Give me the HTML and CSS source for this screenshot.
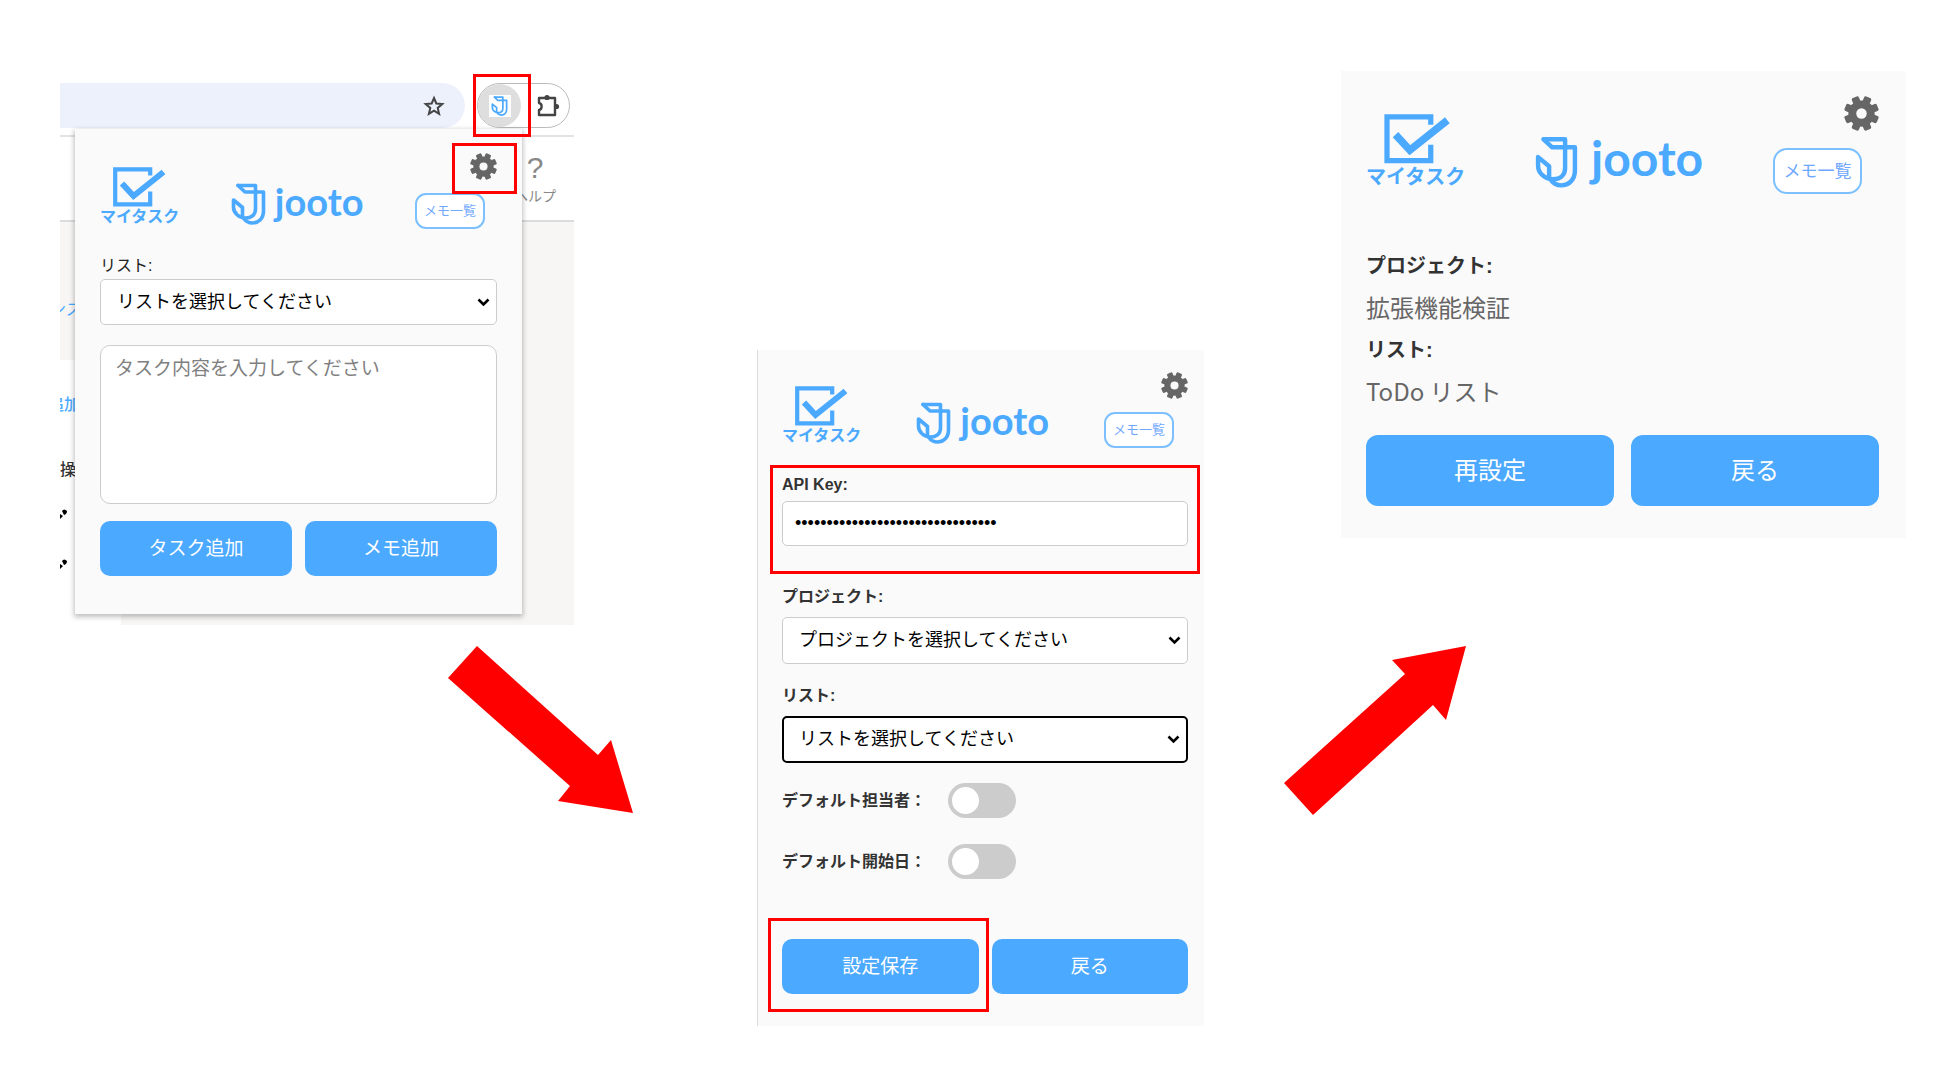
FILE: index.html
```html
<!DOCTYPE html>
<html lang="ja">
<head>
<meta charset="utf-8">
<meta name="viewport" content="width=device-width, initial-scale=1">
<title>jooto マイタスク 設定手順</title>
<link rel="stylesheet" href="styles.css">
</head>
<body>
<svg class="sprite" aria-hidden="true">
  <symbol id="gear" viewBox="0 0 24 24">
    <circle cx="12" cy="12" r="9"/>
    <g>
      <rect x="9.4" y="0" width="5.2" height="24" rx="1.2" transform="rotate(22.5 12 12)"/>
      <rect x="9.4" y="0" width="5.2" height="24" rx="1.2" transform="rotate(67.5 12 12)"/>
      <rect x="9.4" y="0" width="5.2" height="24" rx="1.2" transform="rotate(112.5 12 12)"/>
      <rect x="9.4" y="0" width="5.2" height="24" rx="1.2" transform="rotate(157.5 12 12)"/>
    </g>
    <circle cx="12" cy="12" r="3.6" fill="#fafafa"/>
  </symbol>
  <symbol id="check" viewBox="0 0 54 40">
    <path d="M37.2 8.5V2.3H2.2V37.3H37.2V24.5" fill="none" stroke="currentColor" stroke-width="4.2"/>
    <path d="M9 16.5L20.5 29L50.5 5" fill="none" stroke="currentColor" stroke-width="6"/>
  </symbol>
  <symbol id="mark" viewBox="0 0 35 42">
    <g fill="none" stroke="currentColor" stroke-width="3.6" stroke-linejoin="round" stroke-linecap="round">
      <path d="M7 2.5L14 9H32.5V28C32.5 36 27 40 21.5 40C17.500 40 14.500 38 12.500 35"/>
      <path d="M7 2.500H24.500V26C24.500 32 20 35 14.500 35C8 35 2.500 30 2.500 24V17L11.500 24.500V34"/>
    </g>
  </symbol>
</svg>

<main class="steps">
  <section class="browser" aria-label="拡張機能を開く">
    <div class="toolbar">
      <div class="address">
        <svg class="star" viewBox="0 0 24 24"><path d="M12 4L14.300 9.500L20.300 10L15.700 13.900L17.100 19.800L12 16.600L6.900 19.800L8.300 13.900L3.700 10L9.700 9.500Z" fill="none" stroke="#444" stroke-width="2"/></svg>
      </div>
      <div class="extensions">
        <button class="ext-button" type="button" aria-label="jooto">
          <span class="ext-icon"><svg class="ext-mark"><use href="#mark"/></svg></span>
          <span class="callout callout-ext"></span>
        </button>
        <svg class="puzzle" viewBox="0 0 24 24"><path d="M3 4H19V21H3V16C6.500 15.500 6.500 9.500 3 9Z" fill="none" stroke="#444" stroke-width="2.400" stroke-linejoin="round"/><circle cx="11" cy="3.500" r="2.600" fill="#444"/><circle cx="20.500" cy="12.500" r="2.600" fill="#444"/></svg>
      </div>
    </div>
    <div class="app-bar">
      <div class="help"><span class="help-mark">?</span><span>ヘルプ</span></div>
    </div>
    <div class="app-body">
      <div class="side">
        <div class="side-top"><a href="#" class="clip">ンス</a></div>
        <a href="#" class="clip side-add">追加</a>
        <span class="clip">操</span>
        <svg class="pencil" viewBox="0 0 8 12"><path d="M0 6L3 8L0 11ZM2 3Q4 0 7 3Q7 6 4 7Z"/></svg>
        <svg class="pencil" viewBox="0 0 8 12"><path d="M0 6L3 8L0 11ZM2 3Q4 0 7 3Q7 6 4 7Z"/></svg>
      </div>
    </div>

    <form class="popup popup-task">
      <header class="head">
        <div class="mytask"><svg class="check"><use href="#check"/></svg><span>マイタスク</span></div>
        <div class="logo"><svg class="mark"><use href="#mark"/></svg><span class="word">jooto</span></div>
        <div class="actions">
          <button class="gear-button" type="button" aria-label="設定"><svg class="gear"><use href="#gear"/></svg><span class="callout callout-gear"></span></button>
          <button class="memo" type="button">メモ一覧</button>
        </div>
      </header>
      <div class="field field-task">
        <label class="label-plain" for="task-list">リスト:</label>
        <select class="box" id="task-list"><option>リストを選択してください</option></select>
      </div>
      <textarea class="task-text" aria-label="タスク内容" placeholder="タスク内容を入力してください"></textarea>
      <div class="buttons">
        <button class="primary" type="button">タスク追加</button>
        <button class="primary" type="button">メモ追加</button>
      </div>
    </form>
  </section>

  <svg class="arrow arrow-down" viewBox="0 0 185 167" aria-hidden="true"><path d="M29 0L150 109L163 94L185 167L110 155L122 140L0 32Z"/></svg>

  <form class="popup popup-settings" aria-label="設定">
    <header class="head">
      <div class="mytask"><svg class="check"><use href="#check"/></svg><span>マイタスク</span></div>
      <div class="logo"><svg class="mark"><use href="#mark"/></svg><span class="word">jooto</span></div>
      <div class="actions">
        <button class="gear-button" type="button" aria-label="設定"><svg class="gear"><use href="#gear"/></svg></button>
        <button class="memo" type="button">メモ一覧</button>
      </div>
    </header>
    <div class="field field-key">
      <label for="api-key">API Key:</label>
      <input class="box" id="api-key" type="password" autocomplete="off" value="00000000000000000000000000000000">
      <span class="callout callout-key"></span>
    </div>
    <div class="field">
      <label for="project">プロジェクト:</label>
      <select class="box" id="project"><option>プロジェクトを選択してください</option></select>
    </div>
    <div class="field">
      <label for="list">リスト:</label>
      <select class="box box-focus" id="list"><option>リストを選択してください</option></select>
    </div>
    <div class="switches">
      <div class="switch-row"><label for="assignee">デフォルト担当者：</label><input class="switch" id="assignee" type="checkbox"></div>
      <div class="switch-row"><label for="start">デフォルト開始日：</label><input class="switch" id="start" type="checkbox"></div>
    </div>
    <div class="buttons">
      <button class="primary" type="button">設定保存<span class="callout callout-save"></span></button>
      <button class="primary" type="button">戻る</button>
    </div>
  </form>

  <svg class="arrow arrow-up" viewBox="0 0 182 170" aria-hidden="true"><path d="M182 0L162 74L149 59L29 169L0 137L121 28L108 14Z"/></svg>

  <section class="popup popup-summary" aria-label="設定内容">
    <header class="head">
      <div class="mytask"><svg class="check"><use href="#check"/></svg><span>マイタスク</span></div>
      <div class="logo"><svg class="mark"><use href="#mark"/></svg><span class="word">jooto</span></div>
      <div class="actions">
        <button class="gear-button" type="button" aria-label="設定"><svg class="gear"><use href="#gear"/></svg></button>
        <button class="memo" type="button">メモ一覧</button>
      </div>
    </header>
    <dl class="summary">
      <dt>プロジェクト:</dt>
      <dd>拡張機能検証</dd>
      <dt>リスト:</dt>
      <dd>ToDo リスト</dd>
    </dl>
    <div class="buttons">
      <button class="primary" type="button">再設定</button>
      <button class="primary" type="button">戻る</button>
    </div>
  </section>
</main>
</body>
</html>
```

FILE: styles.css
```css
* { box-sizing: border-box; }

body {
  margin: 0;
  background: #fff;
  color: #333;
  font-family: "Liberation Sans", "Noto Sans CJK JP", sans-serif;
  font-size: 16px;
  line-height: 24px;
}

button, input, select, textarea { font-family: inherit; margin: 0; }
button { cursor: pointer; }
svg { display: block; }
.sprite { position: absolute; width: 0; height: 0; }

/* Overlapping columns, so that each arrow can reach under its neighbours */
.steps {
  display: grid;
  grid-template-columns: 388fr 126fr 59fr 124fr 447fr 80fr 57fr 125fr 440fr;
  align-items: start;
  padding: 0 54px 53px 60px;
}
.steps > * { grid-row: 1; min-width: 0; }
.browser { grid-column: 1 / 3; margin-top: 83px; }
.arrow-down { grid-column: 2 / 4; margin-top: 646px; }
.popup-settings { grid-column: 5 / 6; margin-top: 350px; }
.arrow-up { grid-column: 7 / 9; margin-top: 646px; }
.popup-summary { grid-column: 8 / 10; margin-top: 71px; }
.arrow { width: 100%; fill: #f00; }

/* Browser window */
.browser { position: relative; }
.toolbar {
  display: flex;
  gap: 12px;
  height: 54px;
  padding-right: 4px;
  border-bottom: 2px solid #e3e3e3;
}
.address {
  flex: 1;
  display: flex;
  align-items: center;
  justify-content: flex-end;
  height: 45px;
  padding-right: 19px;
  border-radius: 0 23px 23px 0;
  background: #ecf1fb;
}
.star { width: 24px; height: 24px; }
.extensions {
  display: flex;
  align-items: center;
  gap: 15px;
  width: 93px;
  height: 45px;
  border: 1px solid #bbb;
  border-radius: 23px;
}
.ext-button {
  position: relative;
  display: grid;
  place-items: center;
  width: 43px;
  height: 43px;
  padding: 0;
  border: 0;
  border-radius: 50%;
  background: #dedede;
}
.ext-icon {
  display: grid;
  place-items: center;
  width: 22px;
  height: 22px;
  background: #fff;
  color: #4ba9ff;
}
.ext-mark { width: 17px; height: 20px; }
.puzzle { width: 24px; height: 24px; }
.app-bar {
  display: flex;
  justify-content: flex-end;
  height: 85px;
  padding-right: 18px;
  border-bottom: 2px solid #dcdcdc;
}
.help {
  display: flex;
  flex-direction: column;
  align-items: center;
  padding-top: 15px;
  color: #888;
  font-size: 14px;
}
.help-mark { font-size: 30px; line-height: 32px; }
.app-body { height: 403px; background: #f7f6f4; }
.side {
  display: flex;
  flex-direction: column;
  width: 61px;
  height: 403px;
  overflow: hidden;
  background: #fff;
}
.side-top { height: 138px; padding-top: 76px; background: #f7f6f4; }
.clip { display: block; margin-left: -10px; color: #333; font-size: 16px; white-space: nowrap; }
.side a { color: #4ba9ff; text-decoration: none; }
.side .side-add { margin: 33px 0 41px -12px; font-weight: 500; }
.side span.clip { margin-left: 0; margin-bottom: 26px; font-weight: 500; }
.pencil { width: 8px; height: 12px; margin-bottom: 38px; }

/* Extension popup */
.popup { padding: 24px 25px; background: #fafafa; }
.popup-task {
  position: absolute;
  z-index: 1;
  top: 46px;
  left: 15px;
  right: 52px;
  padding-bottom: 38px;
  box-shadow: 0 2px 5px 1px rgba(0, 0, 0, .25);
}
.popup-settings {
  padding: 22px 16px 32px 24px;
  border-left: 1px solid #ddd;
}
.popup-summary { padding: 25px 27px 32px 25px; }

.head {
  display: flex;
  justify-content: space-between;
  align-items: flex-end;
  margin-bottom: 25px;
  color: #4ba9ff;
}
.mytask { margin-bottom: 2px; font-size: 16px; font-weight: 700; line-height: 20px; }
.check { width: 54px; height: 40px; margin-left: 13px; }
.logo { display: flex; gap: 9px; align-items: center; margin-bottom: 4px; }
.mark { width: 35px; height: 42px; }
.word {
  padding-bottom: 6px;
  font-family: Lato, sans-serif;
  font-size: 38px;
  font-weight: 700;
  line-height: 36px;
}
.actions { display: flex; flex-direction: column; gap: 13px; width: 82px; }
.popup-settings .actions { width: 84px; }
.gear-button {
  position: relative;
  align-self: flex-end;
  padding: 0;
  border: 0;
  background: none;
  fill: #666;
}
.gear { width: 27px; height: 27px; }
.memo {
  align-self: flex-start;
  width: 70px;
  height: 36px;
  padding: 0 0 3px;
  border: 2px solid #7cc0ff;
  border-radius: 11px;
  background: #fff;
  color: #6fa8ff;
  font-size: 13px;
}

.field { position: relative; display: flex; flex-direction: column; gap: 8px; margin-bottom: 20px; }
.field label, .switch-row label { color: #333; font-weight: 700; }
.field .label-plain { color: #222; font-weight: 400; }
.field-task { gap: 1px; }
.field-key { gap: 4px; margin-bottom: 39px; }
.box {
  width: 100%;
  height: 45px;
  padding: 0 12px;
  border: 1px solid #ccc;
  border-radius: 5px;
  background: #fff;
  color: #000;
  font-size: 18px;
}
select.box {
  appearance: none;
  height: 46px;
  padding: 0 30px 1px 16px;
  background: #fff url("data:image/svg+xml,%3Csvg xmlns='http://www.w3.org/2000/svg' viewBox='0 0 13 9'%3E%3Cpath d='M1.500 1.500L6.500 6.500L11.500 1.500' fill='none' stroke='%23000' stroke-width='2.600'/%3E%3C/svg%3E") no-repeat right 6px center / 13px 9px;
}
.popup-settings select.box { height: 47px; }
select.box-focus { border: 2px solid #000; padding-left: 15px; }
.task-text {
  display: block;
  width: 100%;
  height: 159px;
  padding: 10px 14px;
  border: 1px solid #ccc;
  border-radius: 10px;
  background: #fff;
  font-size: 19px;
  line-height: 26px;
  resize: none;
}
.task-text::placeholder { color: #808080; }

.buttons { display: flex; gap: 13px; margin-top: 17px; }
.primary {
  position: relative;
  flex: 1;
  height: 55px;
  padding: 0 0 4px;
  border: 0;
  border-radius: 10px;
  background: #4ba9ff;
  color: #fff;
  font-size: 19px;
}

.switches { display: flex; flex-direction: column; gap: 26px; }
.switch-row { display: flex; align-items: center; gap: 22px; }
.switch {
  appearance: none;
  width: 68px;
  height: 35px;
  padding: 4px;
  border-radius: 18px;
  background: #ccc;
}
.switch::before {
  content: "";
  display: block;
  width: 27px;
  height: 27px;
  border-radius: 50%;
  background: #fff;
}
.popup-settings .buttons { margin-top: 60px; }

/* Summary popup, shown at a larger scale */
.popup-summary .head { margin-bottom: 51px; }
.popup-summary .mytask { margin-bottom: 4px; font-size: 20px; line-height: 26px; }
.popup-summary .check { width: 68px; height: 50px; margin-left: 18px; }
.popup-summary .logo { margin-bottom: 6px; gap: 13px; }
.popup-summary .mark { width: 43px; height: 52px; }
.popup-summary .word { padding-bottom: 8px; font-size: 48px; line-height: 44px; }
.popup-summary .actions { width: 106px; gap: 17px; }
.popup-summary .gear { width: 35px; height: 35px; }
.popup-summary .memo { width: 89px; height: 46px; padding-bottom: 4px; border-radius: 14px; font-size: 17px; }
.popup-summary .buttons { margin-top: 22px; gap: 17px; }
.popup-summary .primary { height: 71px; border-radius: 12px; font-size: 24px; }
.summary { margin: 0; line-height: 42px; }
.summary dt { color: #333; font-size: 20px; font-weight: 700; }
.summary dd {
  margin: 0;
  padding-bottom: 2px;
  color: #666;
  font-family: "Noto Sans CJK JP", sans-serif;
  font-size: 24px;
  line-height: 40px;
}

/* Red outlines that point out the controls of each step */
.callout { position: absolute; z-index: 2; border: 3px solid #f00; pointer-events: none; }
.callout-ext { inset: -10px -10px -10px -5px; }
.callout-gear { inset: -10px -20px -14px -18px; }
.callout-key { inset: -8px -12px -28px -12px; }
.callout-save { inset: -21px -10px -18px -14px; }
```
